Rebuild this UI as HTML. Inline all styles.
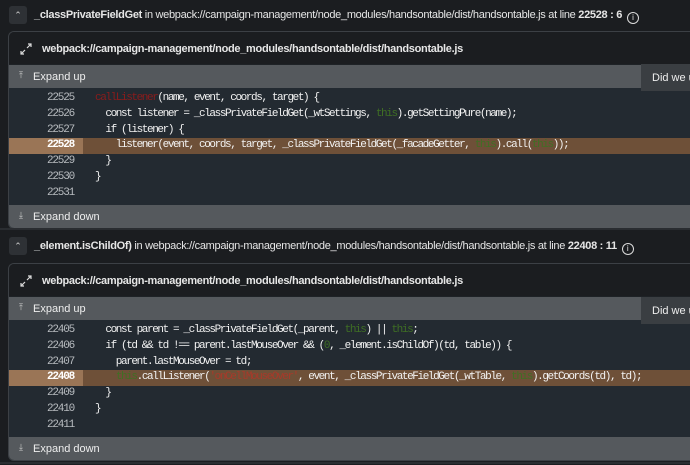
<!DOCTYPE html>
<html><head><meta charset="utf-8"><style>
*{margin:0;padding:0;box-sizing:border-box}
body{width:690px;height:465px;background:#1b1d20;font-family:"Liberation Sans",sans-serif;color:#e6e6e6;position:relative;overflow:hidden}
.hdr{position:absolute;left:0;width:690px;height:28px;font-size:11px;}
.hdr .btn{position:absolute;left:9px;top:5px;width:18px;height:18px;background:#2e3135;border-radius:3px;color:#ccc;font-size:9px;text-align:center;line-height:18px}
.hdr .t{position:absolute;left:34px;top:8px;white-space:nowrap;letter-spacing:-0.3px}
.hdr b{font-weight:bold}
.info{display:inline-block;width:12px;height:12px;border:1px solid #ddd;border-radius:50%;font-size:8px;text-align:center;line-height:10px;vertical-align:-2px;margin-left:2px}
.panel{position:absolute;left:8px;width:690px;border:1px solid #3c4045;border-right:none;border-radius:6px 0 0 6px;background:#1e2226;overflow:hidden}
.fh{height:32px;background:#1b1d20;font-size:11px;font-weight:bold;padding:11px 0 0 33px;position:relative;letter-spacing:-0.3px}
.fh svg{position:absolute;left:10px;top:10px}
.bar{height:23px;background:#55595d;font-size:11px;padding:6px 0 0 24px;position:relative;color:#eee}
.bar .ic{position:absolute;left:10px;top:5px;font-size:9px;color:#ccc}
.code{background:#232a31;padding:3px 0 3px 0}
.ln{height:15.8px;font-family:"Liberation Mono",monospace;font-size:11px;letter-spacing:-1.4px;line-height:15.8px;white-space:pre;position:relative;color:#f2f2f2}
.ln .n{display:inline-block;width:74px;text-align:right;padding-right:9px;color:#b8bcc0;margin-right:12px;letter-spacing:-1.2px}
.ln.hl{background:#6e5038}
.ln.hl .n{background:#9a7556;color:#fff;font-weight:bold}
.r{color:#8a1c1c}.g{color:#3f6f24}.s{color:#a8392a}
.pop{position:absolute;left:641px;width:60px;height:27px;background:#3a3e42;font-size:11px;padding:8px 0 0 11px;white-space:nowrap;color:#eee}
.sep{position:absolute;left:0;width:690px;height:2px;background:#2a2d31}
</style></head><body>
<div class="hdr" style="top:1px"><div class="btn">⌃</div><div class="t"><b>_classPrivateFieldGet</b> in webpack://campaign-management/node_modules/handsontable/dist/handsontable.js at line <b>22528 : 6</b> <span class="info">i</span></div></div>
<div class="panel" style="top:31px">
<div class="fh"><svg width="14" height="14" viewBox="0 0 14 14" fill="none" stroke="#ddd" stroke-width="1.2"><path d="M8 6 L12 2 M9 2 H12 V5 M6 8 L2 12 M2 9 V12 H5"/></svg>webpack://campaign-management/node_modules/handsontable/dist/handsontable.js</div>
<div class="bar" style="margin-top:1px"><span class="ic">⤒</span>Expand up</div>
<div class="code">
<div class="ln"><span class="n">22525</span><span class="r">callListener</span>(name, event, coords, target) {</div>
<div class="ln"><span class="n">22526</span>  const listener = _classPrivateFieldGet(_wtSettings, <span class="g">this</span>).getSettingPure(name);</div>
<div class="ln"><span class="n">22527</span>  if (listener) {</div>
<div class="ln hl"><span class="n">22528</span>    listener(event, coords, target, _classPrivateFieldGet(_facadeGetter, <span class="g">this</span>).call(<span class="g">this</span>));</div>
<div class="ln"><span class="n">22529</span>  }</div>
<div class="ln"><span class="n">22530</span>}</div>
<div class="ln"><span class="n">22531</span></div>
</div>
<div class="bar"><span class="ic">⤓</span>Expand down</div>
</div>
<div class="pop" style="top:64px">Did we u</div>
<div class="sep" style="top:228px"></div>
<div class="hdr" style="top:232px"><div class="btn">⌃</div><div class="t"><b>_element.isChildOf)</b> in webpack://campaign-management/node_modules/handsontable/dist/handsontable.js at line <b>22408 : 11</b> <span class="info">i</span></div></div>
<div class="panel" style="top:263px">
<div class="fh"><svg width="14" height="14" viewBox="0 0 14 14" fill="none" stroke="#ddd" stroke-width="1.2"><path d="M8 6 L12 2 M9 2 H12 V5 M6 8 L2 12 M2 9 V12 H5"/></svg>webpack://campaign-management/node_modules/handsontable/dist/handsontable.js</div>
<div class="bar" style="margin-top:1px"><span class="ic">⤒</span>Expand up</div>
<div class="code">
<div class="ln"><span class="n">22405</span>  const parent = _classPrivateFieldGet(_parent, <span class="g">this</span>) || <span class="g">this</span>;</div>
<div class="ln"><span class="n">22406</span>  if (td &amp;&amp; td !== parent.lastMouseOver &amp;&amp; (<span class="g">0</span>, _element.isChildOf)(td, table)) {</div>
<div class="ln"><span class="n">22407</span>    parent.lastMouseOver = td;</div>
<div class="ln hl"><span class="n">22408</span>    <span class="g">this</span>.callListener(<span class="s">'onCellMouseOver'</span>, event, _classPrivateFieldGet(_wtTable, <span class="g">this</span>).getCoords(td), td);</div>
<div class="ln"><span class="n">22409</span>  }</div>
<div class="ln"><span class="n">22410</span>}</div>
<div class="ln"><span class="n">22411</span></div>
</div>
<div class="bar"><span class="ic">⤓</span>Expand down</div>
</div>
<div class="pop" style="top:297px">Did we u</div>
<div class="sep" style="top:462px"></div>
</body></html>
